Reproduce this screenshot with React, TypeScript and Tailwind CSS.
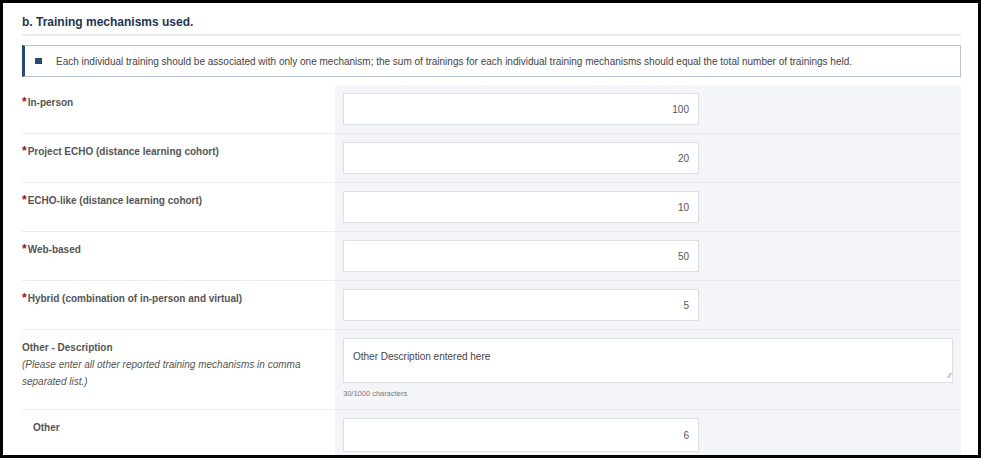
export default function App() {
  const rows = [
    ["In-person", "100"],
    ["Project ECHO (distance learning cohort)", "20"],
    ["ECHO-like (distance learning cohort)", "10"],
    ["Web-based", "50"],
    ["Hybrid (combination of in-person and virtual)", "5"],
  ];
  return (
    <div className="w-[981px] h-[458px] overflow-hidden bg-white border-[3px] border-black text-[#333]" style={{ fontFamily: "Arial, 'Liberation Sans', sans-serif" }}>
      <div className="pl-[19px] pr-[17px]">
        <div className="pt-[10px] pb-[3px] border-b-2 border-[#e8ecf1] text-[12px] font-bold text-[#1c3553]">b. Training mechanisms used.</div>
        <div className="mt-[9px] h-[32px] border border-[#b5c3d2] border-l-[3px] border-l-[#2a4a6c] flex items-center pl-[10px] text-[10px] text-[#444]">
          <span className="w-[7px] h-[6px] bg-[#2a4a6c] mr-[14px]" />
          Each individual training should be associated with only one mechanism; the sum of trainings for each individual training mechanisms should equal the total number of trainings held.
        </div>
        <div className="mt-[8px]">
          {rows.map(([l, v]) => (
            <div key={l} className="flex h-[49px] border-b border-[#e8ebef]">
              <div className="w-[313px] pt-[8px] text-[10px] font-bold text-[#555]">
                <span className="text-[#8b1a1a] text-[12px] mr-[1px]">*</span>{l}
              </div>
              <div className="flex-1 bg-[#f4f5f8] pt-[8px] pl-[8px]">
                <div className="w-[356px] h-[32px] bg-white border border-[#dcdfe3] flex items-center justify-end pr-[9px] text-[10px] text-[#555]">{v}</div>
              </div>
            </div>
          ))}
          <div className="flex h-[80px] border-b border-[#e8ebef]">
            <div className="w-[313px] pt-[9px] text-[10px] text-[#555] leading-[17px]">
              <div className="font-bold">Other - Description</div>
              <div className="italic">(Please enter all other reported training mechanisms in comma separated list.)</div>
            </div>
            <div className="flex-1 bg-[#f4f5f8] pt-[8px] pl-[8px] pr-[8px]">
              <div className="relative h-[45px] bg-white border border-[#dcdfe3] pl-[9px] pt-[10px] text-[10px] text-[#444]">
                Other Description entered here
                <span className="absolute right-[1px] bottom-0 text-[8px] text-[#888]">⁄⁄</span>
              </div>
              <div className="mt-[5px] text-[7.5px] text-[#777]">30/1000 characters</div>
            </div>
          </div>
          <div className="flex h-[49px]">
            <div className="w-[313px] pt-[10px] pl-[11px] text-[10px] font-bold text-[#555]">Other</div>
            <div className="flex-1 bg-[#f4f5f8] pt-[8px] pl-[8px]">
              <div className="w-[356px] h-[34px] bg-white border border-[#dcdfe3] flex items-center justify-end pr-[9px] text-[10px] text-[#555]">6</div>
            </div>
          </div>
        </div>
      </div>
    </div>
  );
}
